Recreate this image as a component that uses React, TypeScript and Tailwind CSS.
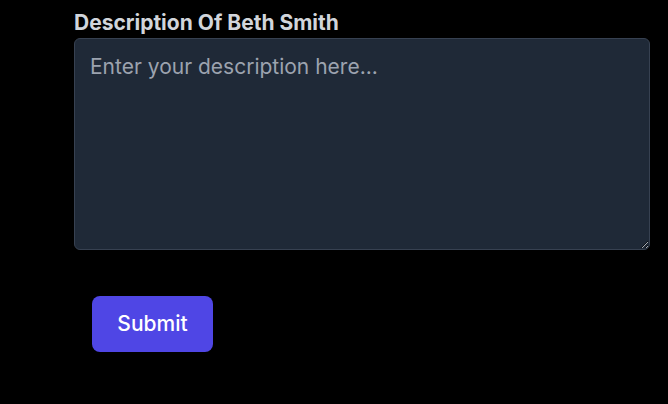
export default function App() {
  return (
    <div className="min-h-screen w-[668px] h-[404px] bg-black font-['Inter',sans-serif] pl-[74px] pr-[18px] pt-[9px]">
      <label htmlFor="desc" className="block text-[21px] font-bold text-[#d1d5db] leading-[28px] mb-[1px]">
        Description Of Beth Smith
      </label>
      <textarea
        id="desc"
        placeholder="Enter your description here..."
        className="block w-full h-[212px] rounded-md border border-[#374151] bg-[#1f2937] px-[15px] pt-[14px] pb-[10px] text-[21px] leading-[28px] text-[#e5e7eb] placeholder:text-[#9ca3af] outline-none"
      />
      <div className="mt-[46px] ml-[18px]">
        <button className="h-14 w-[121px] rounded-lg bg-[#4f46e5] text-[21px] font-medium text-white">
          Submit
        </button>
      </div>
    </div>
  );
}
